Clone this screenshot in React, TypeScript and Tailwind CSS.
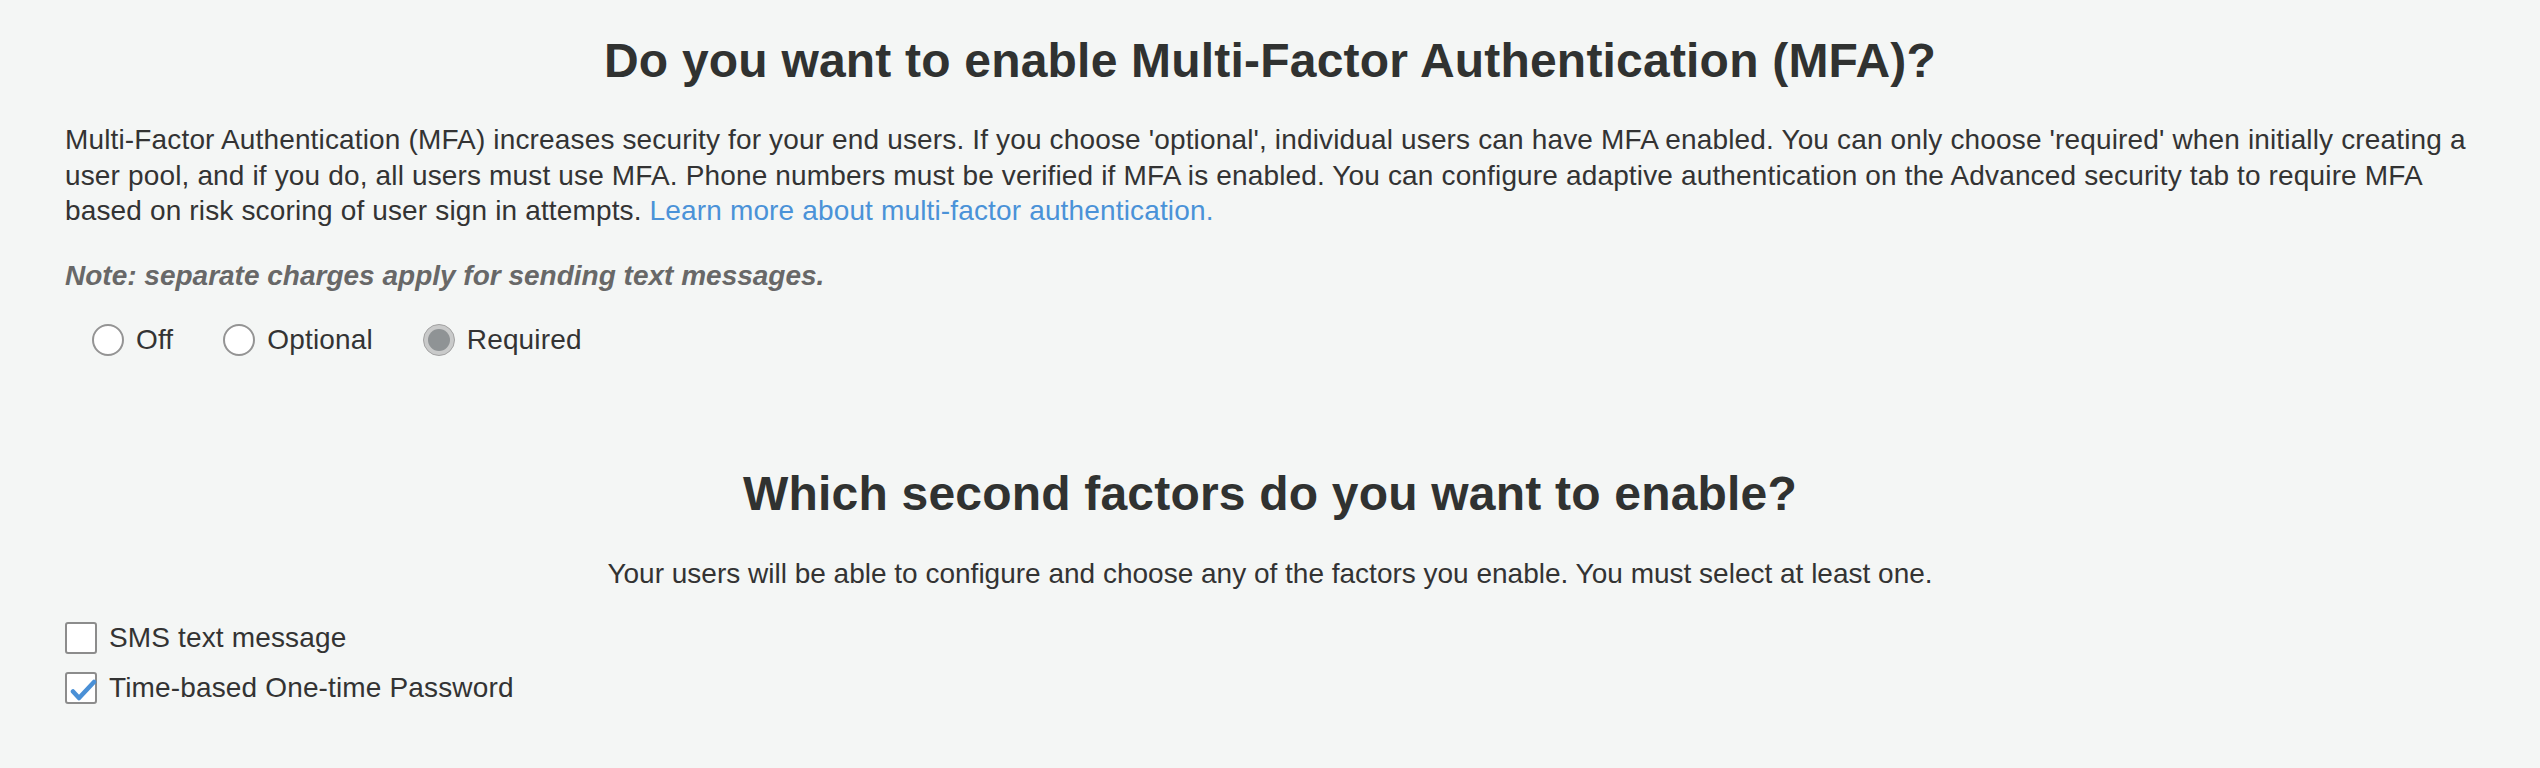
import React from 'react'

const RADIOS = [
  { label: 'Off', checked: false },
  { label: 'Optional', checked: false },
  { label: 'Required', checked: true },
]

const FACTORS = [
  { label: 'SMS text message', checked: false },
  { label: 'Time-based One-time Password', checked: true },
]

const Radio: React.FC<{ checked: boolean }> = ({ checked }) =>
  checked ? (
    <span className="flex h-[32px] w-[32px] shrink-0 items-center justify-center rounded-full border-[1.5px] border-[#a2a2a2] bg-[#c9caca]">
      <span className="h-[22px] w-[22px] rounded-full bg-[#8f9395]" />
    </span>
  ) : (
    <span className="h-[32px] w-[32px] shrink-0 rounded-full border-2 border-[#949494] bg-white" />
  )

const Checkbox: React.FC<{ checked: boolean }> = ({ checked }) => (
  <span className="relative h-[32px] w-[32px] shrink-0 rounded-[3px] border-2 border-[#8c8c8c] bg-white">
    {checked && (
      <svg className="absolute left-[2px] top-[5px]" width="30" height="22" viewBox="0 0 30 22">
        <path d="M4 12.5 L10 19 L25 3" fill="none" stroke="#4a90d6" strokeWidth="4.5" strokeLinecap="round" strokeLinejoin="round" />
      </svg>
    )}
  </span>
)

export default function App() {
  return (
    <div className="min-h-screen bg-[#f4f6f5] px-[65px] pt-[33px] text-[#333] tracking-[0.15px] font-['Liberation_Sans',Arial,sans-serif]">
      {/* MFA section */}
      <h1 className="text-center text-[48px] font-bold leading-[56px] tracking-[0.2px] text-[#303231]">
        Do you want to enable Multi-Factor Authentication (MFA)?
      </h1>
      <p className="mt-[33px] text-[28px] leading-[35.5px]">
        Multi-Factor Authentication (MFA) increases security for your end users. If you choose 'optional', individual users can have
        MFA enabled. You can only choose 'required' when initially creating a user pool, and if you do, all users must use MFA. Phone
        numbers must be verified if MFA is enabled. You can configure adaptive authentication on the Advanced security tab to require
        MFA based on risk scoring of user sign in attempts.{' '}
        <a className="text-[#4a92d8]">Learn more about multi-factor authentication.</a>
      </p>
      <p className="mt-[29px] text-[28px] font-bold italic leading-[35.5px] tracking-normal text-[#686868]">
        Note: separate charges apply for sending text messages.
      </p>
      <div className="mt-[29px] flex items-center gap-[50px] pl-[27px]">
        {RADIOS.map((r) => (
          <label key={r.label} className="flex items-center gap-[12px] text-[28px] leading-[35.5px]">
            <Radio checked={r.checked} />
            <span>{r.label}</span>
          </label>
        ))}
      </div>

      {/* Second factors */}
      <h2 className="mt-[108px] text-center text-[48px] font-bold leading-[56px] tracking-[0.2px] text-[#303231]">
        Which second factors do you want to enable?
      </h2>
      <p className="mt-[34px] text-center text-[28px] leading-[35.5px] tracking-normal">
        Your users will be able to configure and choose any of the factors you enable. You must select at least one.
      </p>
      <div className="mt-[22px] flex flex-col">
        {FACTORS.map((f) => (
          <label key={f.label} className="flex h-[50px] items-center gap-[12px] text-[28px] leading-[35.5px]">
            <Checkbox checked={f.checked} />
            <span>{f.label}</span>
          </label>
        ))}
      </div>
    </div>
  )
}
